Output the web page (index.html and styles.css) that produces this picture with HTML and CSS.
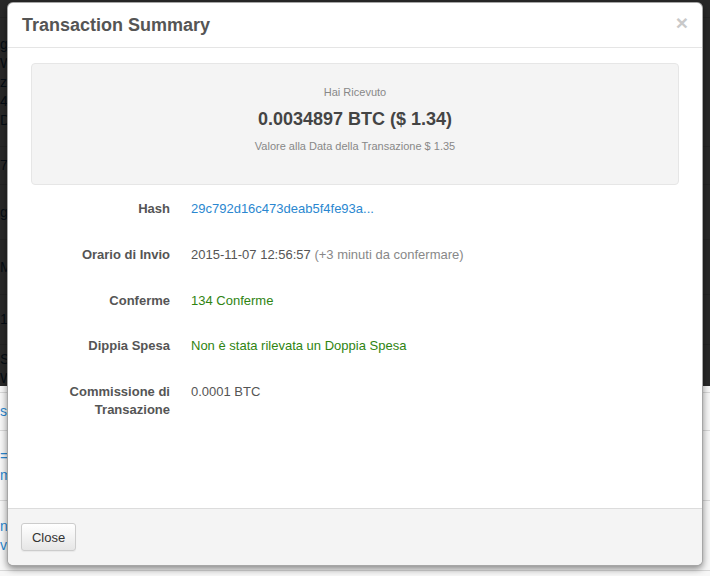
FILE: index.html
```html
<!DOCTYPE html>
<html>
<head>
<meta charset="utf-8">
<link rel="stylesheet" href="styles.css">
</head>
<body>
<div class="page">
  <div class="bg-row tall"><span class="bg-t">&nbsp;</span></div>
  <div class="bg-row block"><span class="bg-t">g</span><span class="bg-t">W</span><span class="bg-t">z</span><span class="bg-t">4(</span><span class="bg-t">D</span></div>
  <div class="bg-row mid"><span class="bg-t">7b</span></div>
  <div class="bg-row mid2"><span class="bg-t">g</span></div>
  <div class="bg-row mid2"><span class="bg-t">M7</span></div>
  <div class="bg-row mid3"><span class="bg-t">1</span></div>
  <div class="bg-row pair"><span class="bg-t">Si</span><span class="bg-t">W</span></div>
  <div class="bg-row lite"><span class="bg-t link">si</span></div>
  <div class="bg-row lite2"><span class="bg-t link">=</span><span class="bg-t link">m</span></div>
  <div class="bg-row lite2"><span class="bg-t link">n</span><span class="bg-t link">v</span></div>
</div>
<div class="backdrop"></div>

<div class="modal">
  <div class="modal-header">
    <h4 class="modal-title">Transaction Summary</h4>
    <span class="close">&times;</span>
  </div>
  <div class="modal-body">
    <div class="well">
      <div class="well-small">Hai Ricevuto</div>
      <div class="well-amount">0.0034897 BTC ($ 1.34)</div>
      <div class="well-small">Valore alla Data della Transazione $ 1.35</div>
    </div>
    <div class="details">
      <div class="label">Hash</div>
      <div class="value"><span class="link">29c792d16c473deab5f4fe93a...</span></div>
      <div class="label">Orario di Invio</div>
      <div class="value">2015-11-07 12:56:57 <span class="muted">(+3 minuti da confermare)</span></div>
      <div class="label">Conferme</div>
      <div class="value green">134 Conferme</div>
      <div class="label">Dippia Spesa</div>
      <div class="value green">Non è stata rilevata un Doppia Spesa</div>
      <div class="label">Commissione di Transazione</div>
      <div class="value">0.0001 BTC</div>
    </div>
  </div>
  <div class="modal-footer">
    <button class="btn">Close</button>
  </div>
</div>
</body>
</html>
```

FILE: styles.css
```css
html, body {
  margin: 0;
  padding: 0;
}
body {
  width: 710px;
  height: 576px;
  overflow: hidden;
  background: #f7f7f7;
  font-family: "Liberation Sans", Arial, sans-serif;
  position: relative;
}
.page {
  display: flex;
  flex-direction: column;
  font-size: 14px;
  color: #1d4f7a;
}
.bg-row {
  border-bottom: 1px solid #d8d8d8;
  display: flex;
  flex-direction: column;
  justify-content: center;
}
.bg-t { line-height: 19px; }
.bg-t.link { color: #2a87d0; }
.tall { height: 17px; }
.block { height: 128px; }
.mid { height: 37px; }
.mid2 { height: 54px; }
.mid3 { height: 49px; }
.pair { height: 47px; }
.lite { height: 37px; }
.lite2 { height: 69px; }
.backdrop {
  position: absolute;
  left: 0;
  top: 0;
  width: 710px;
  height: 386px;
  background: rgba(0, 0, 0, 0.84);
}
.modal {
  position: absolute;
  left: 7px;
  top: 2px;
  width: 694px;
  height: 562px;
  background: #fff;
  border: 1px solid rgba(0, 0, 0, 0.35);
  border-radius: 6px;
  box-shadow: 0 3px 7px rgba(0, 0, 0, 0.45);
  display: flex;
  flex-direction: column;
  overflow: hidden;
}
.modal-header {
  height: 44px;
  border-bottom: 1px solid #e5e5e5;
  display: flex;
  align-items: center;
  justify-content: space-between;
  padding: 0 14px 0 14px;
}
.modal-title {
  margin: 0;
  font-size: 18px;
  font-weight: bold;
  color: #555;
  line-height: 22px;
}
.close {
  font-size: 21px;
  font-weight: bold;
  color: #c9c9c9;
  line-height: 20px;
  margin-top: -4px;
}
.modal-body {
  flex: 1;
  padding: 15px 23px 0 23px;
}
.well {
  height: 100px;
  padding-top: 20px;
  background: #f4f4f4;
  border: 1px solid #e6e6e6;
  border-radius: 4px;
  display: flex;
  flex-direction: column;
  align-items: center;
  gap: 7px;
}
.well-small {
  font-size: 11px;
  line-height: 16px;
  color: #888;
}
.well-amount {
  font-size: 18px;
  line-height: 24px;
  font-weight: bold;
  color: #444;
}
.details {
  display: grid;
  grid-template-columns: 139px 1fr;
  column-gap: 21px;
  row-gap: 27.8px;
  margin-top: 15px;
  font-size: 13px;
  line-height: 18px;
}
.label {
  text-align: right;
  font-weight: bold;
  color: #555;
}
.value { color: #555; }
.link { color: #2a87d0; }
.muted { color: #888; }
.green { color: #2f8412; }
.modal-footer {
  height: 42px;
  padding: 14px 13px 0 13px;
  background: #f4f4f4;
  border-top: 1px solid #dcdcdc;
}
.btn {
  width: 55px;
  height: 28px;
  padding: 0;
  font-family: "Liberation Sans", Arial, sans-serif;
  font-size: 13px;
  color: #333;
  background: linear-gradient(#fff, #e6e6e6);
  border: 1px solid #ccc;
  border-radius: 3px;
  box-shadow: 0 1px 1px rgba(0,0,0,0.05);
}
```
